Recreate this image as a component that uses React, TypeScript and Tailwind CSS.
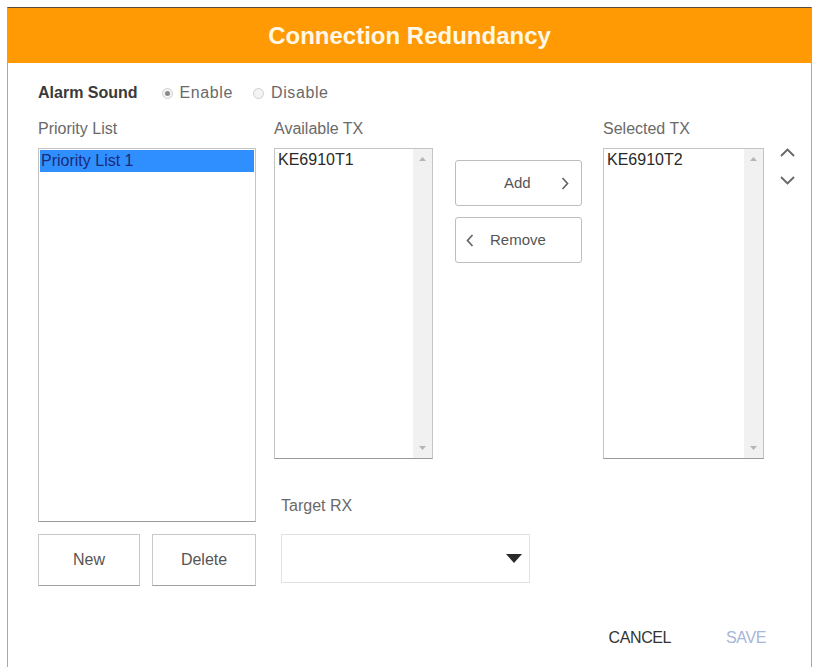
import React from 'react';

const font = { fontFamily: '"Liberation Sans", Arial, sans-serif' };

const Scrollbar: React.FC = () => (
  <div className="flex w-[19px] flex-col items-center justify-between bg-[#f1f1f1] py-[8px]">
    <svg width="7" height="4" viewBox="0 0 7 4">
      <path d="M0 4 L3.5 0 L7 4 Z" fill="#b5b5b5" />
    </svg>
    <svg width="7" height="4" viewBox="0 0 7 4">
      <path d="M0 0 L3.5 4 L7 0 Z" fill="#b5b5b5" />
    </svg>
  </div>
);

const TxList: React.FC<{ item: string; width: string }> = ({ item, width }) => (
  <div className={`flex h-[311px] ${width} border border-[#c4c4c4] border-b-[#9a9a9a] bg-white`}>
    <div className="flex-1 px-[3px] pt-[2px] text-[16px] leading-[18px] text-[#2a2a2a]">{item}</div>
    <Scrollbar />
  </div>
);

const Radio: React.FC<{ checked?: boolean; label: string }> = ({ checked, label }) => (
  <label className="flex items-center gap-[7px] text-[16px] tracking-[0.6px] text-[#6a6a6a]">
    <span className="flex h-[11px] w-[11px] items-center justify-center rounded-full border border-[#cfcfcf] bg-[#f4f4f4]">
      {checked && <span className="h-[5px] w-[5px] rounded-full bg-[#8a8a8a]" />}
    </span>
    {label}
  </label>
);

const App: React.FC = () => {
  return (
    <div className="h-[667px] w-[815px] bg-white pl-[7px] pt-[7px]" style={font}>
      <div className="flex h-[660px] w-[805px] flex-col border-x border-t border-x-[#a8a8a8] border-t-[#5a4a3a]">
        <div className="flex h-[55px] items-center justify-center bg-[#ff9a05]">
          <h1 className="text-[24px] font-bold text-[#fff8e6]">Connection Redundancy</h1>
        </div>

        <div className="flex flex-1 flex-col pl-[30px] pr-[16px]">
          <div className="mt-[22px] flex h-[16px] items-center">
            <span className="mr-[24px] text-[16px] font-bold text-[#3a3a3a]">Alarm Sound</span>
            <div className="flex items-center gap-[20px]">
              <Radio checked label="Enable" />
              <Radio label="Disable" />
            </div>
          </div>

          <div className="mt-[20px] flex">
            {/* priority list column */}
            <div className="flex w-[218px] flex-col">
              <div className="h-[16px] text-[16px] leading-[16px] text-[#6a6a6a]">Priority List</div>
              <div className="mt-[11px] h-[374px] border border-[#c4c4c4] border-b-[#9a9a9a] bg-white p-[1px]">
                <div className="h-[22px] bg-[#2f8fff] px-[1px] text-[16px] leading-[22px] text-[#1c2a78]">
                  Priority List 1
                </div>
              </div>
              <div className="mt-[12px] flex gap-[12px]">
                <button className="h-[52px] w-[102px] border border-[#c8c8c8] border-b-[#a0a0a0] bg-white text-[16px] text-[#555]">
                  New
                </button>
                <button className="h-[52px] w-[104px] border border-[#c8c8c8] border-b-[#a0a0a0] bg-white text-[16px] text-[#555]">
                  Delete
                </button>
              </div>
            </div>

            {/* right area */}
            <div className="ml-[18px] flex flex-col">
              <div className="flex">
                <div className="flex flex-col">
                  <div className="h-[16px] text-[16px] leading-[16px] text-[#6a6a6a]">Available TX</div>
                  <div className="mt-[11px]">
                    <TxList item="KE6910T1" width="w-[159px]" />
                  </div>
                </div>

                <div className="ml-[22px] mt-[39px] flex flex-col gap-[11px]">
                  <button className="relative flex h-[46px] w-[127px] items-center rounded-[3px] border border-[#bdbdbd] bg-white text-[15px] text-[#555]">
                    <span className="absolute left-[48px]">Add</span>
                    <svg className="absolute left-[105px]" width="8" height="13" viewBox="0 0 8 13">
                      <path d="M1.5 1 L6.5 6.5 L1.5 12" fill="none" stroke="#666" strokeWidth="1.7" />
                    </svg>
                  </button>
                  <button className="relative flex h-[46px] w-[127px] items-center rounded-[3px] border border-[#bdbdbd] bg-white text-[15px] text-[#555]">
                    <svg className="absolute left-[10px]" width="8" height="13" viewBox="0 0 8 13">
                      <path d="M6.5 1 L1.5 6.5 L6.5 12" fill="none" stroke="#666" strokeWidth="1.7" />
                    </svg>
                    <span className="absolute left-[34px]">Remove</span>
                  </button>
                </div>

                <div className="ml-[21px] flex flex-col">
                  <div className="h-[16px] text-[16px] leading-[16px] text-[#6a6a6a]">Selected TX</div>
                  <div className="mt-[11px]">
                    <TxList item="KE6910T2" width="w-[161px]" />
                  </div>
                </div>

                <div className="ml-[16px] mt-[27px] flex flex-col items-center gap-[19px]">
                  <svg width="15" height="9" viewBox="0 0 15 9">
                    <path d="M1 8 L7.5 1.5 L14 8" fill="none" stroke="#666" strokeWidth="1.8" />
                  </svg>
                  <svg width="15" height="9" viewBox="0 0 15 9">
                    <path d="M1 1 L7.5 7.5 L14 1" fill="none" stroke="#666" strokeWidth="1.8" />
                  </svg>
                </div>
              </div>

              <div className="ml-[7px] mt-[39px] h-[16px] text-[16px] leading-[16px] text-[#6a6a6a]">Target RX</div>
              <div className="ml-[7px] mt-[20px] flex h-[49px] w-[249px] items-center justify-end border border-[#e2e2e2] bg-white pr-[7px]">
                <svg width="16" height="9" viewBox="0 0 16 9">
                  <path d="M0 0 L16 0 L8 9 Z" fill="#2a2a2a" />
                </svg>
              </div>
            </div>
          </div>

          <div className="mt-[40px] flex justify-end gap-[55px] pr-[29px] text-[16px] tracking-[-0.4px]">
            <span className="text-[#333]">CANCEL</span>
            <span className="text-[#a6b6d8]">SAVE</span>
          </div>
        </div>
      </div>
    </div>
  );
};

export default App;
